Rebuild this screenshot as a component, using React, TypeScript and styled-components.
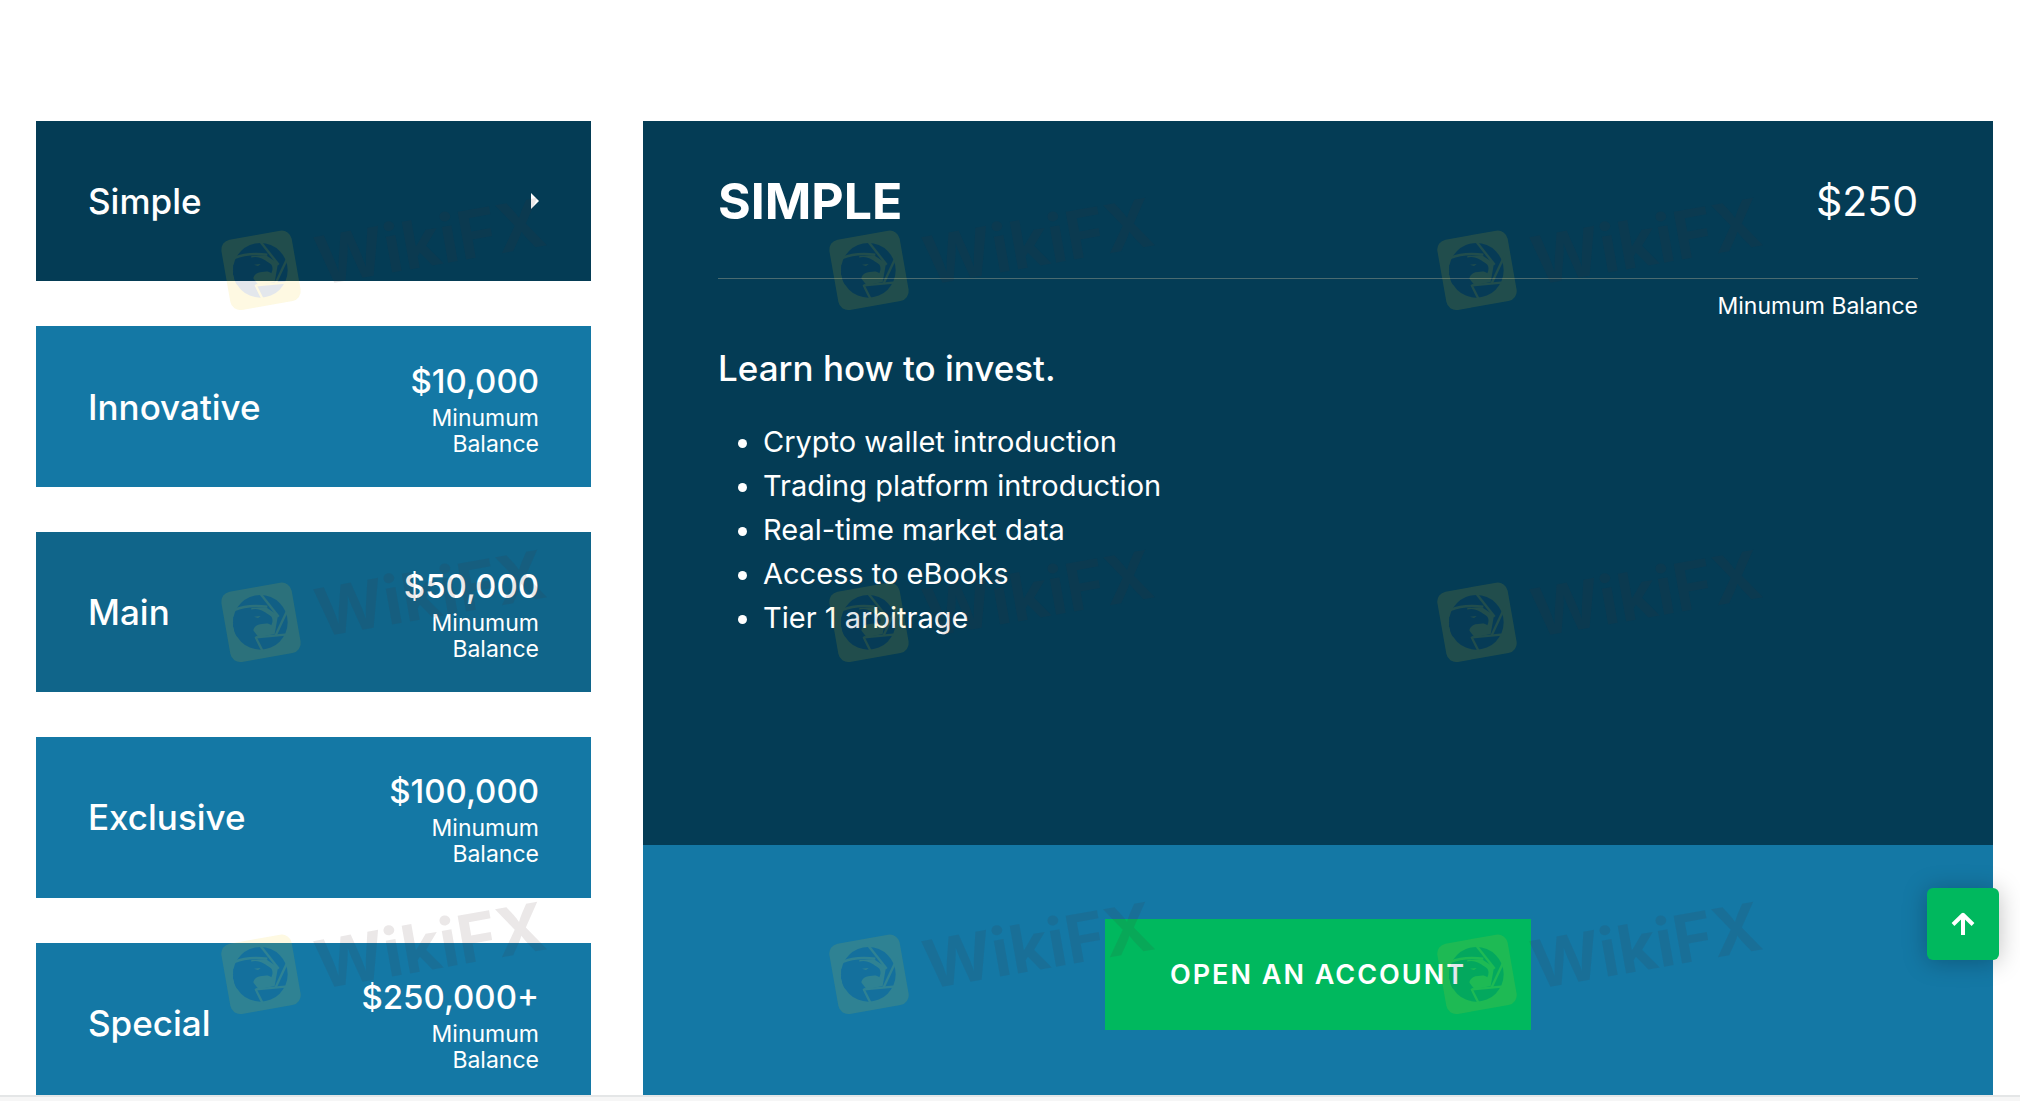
import React, { useState } from "react";
import styled, { createGlobalStyle } from "styled-components";

const GlobalStyle = createGlobalStyle`
  *, *::before, *::after { box-sizing: border-box; }
  body {
    margin: 0;
    background: #fff;
    color: #fff;
    font-family: Inter, "Open Sans", sans-serif;
  }
  h2, h3, p, ul { margin: 0; }
`;

const Page = styled.div`
  display: flex;
  flex-direction: column;
  height: 100vh;
  overflow: hidden;
`;

const Plans = styled.main`
  flex: 1;
  min-height: 0;
  overflow: hidden;
  display: grid;
  grid-template-columns: 37fr 90fr;
  align-items: start;
  align-content: start;
  gap: 52px;
  padding: 121px 27px 0 36px;
`;

const PlanList = styled.nav`
  align-self: stretch;
  display: flex;
  flex-direction: column;
  gap: 45px;
`;

const PlanCard = styled.button<{ $tone: string }>`
  flex: 1;
  display: flex;
  align-items: center;
  justify-content: space-between;
  padding: 0 52px;
  border: 0;
  background: ${(p) => p.$tone};
  color: inherit;
  font: inherit;
  cursor: pointer;
`;

const PlanName = styled.span`
  font-size: 35px;
  line-height: 46px;
  font-weight: 500;
`;

const PlanPrice = styled.span`
  display: flex;
  flex-direction: column;
  align-items: flex-end;
`;

const Amount = styled.span`
  font-size: 33px;
  line-height: 48px;
  font-weight: 500;
`;

const Note = styled.span`
  width: 130px;
  font-size: 23px;
  line-height: 26px;
  text-align: right;
`;

const Caret = styled.svg`
  width: 8px;
  height: 16px;
  fill: #fff;
`;

const Detail = styled.section`
  display: flex;
  flex-direction: column;
`;

const DetailBody = styled.div`
  min-height: 724px;
  padding: 40px 75px;
  background: #043c55;
`;

const DetailHead = styled.header`
  display: flex;
  align-items: center;
  justify-content: space-between;
  padding-bottom: 37px;
  border-bottom: 1px solid #4a6b70;
  line-height: 80px;
`;

const DetailTitle = styled.h2`
  font-size: 50px;
  font-weight: 700;
  text-transform: uppercase;
`;

const DetailAmount = styled.span`
  font-size: 41px;
  font-weight: 400;
`;

const DetailNote = styled.p`
  margin-top: 14px;
  font-size: 23px;
  line-height: 26px;
  text-align: right;
`;

const Lead = styled.h3`
  margin-top: 29px;
  font-size: 35px;
  line-height: 40px;
  font-weight: 500;
`;

const Features = styled.ul`
  margin-top: 32px;
  padding-left: 45px;
  font-size: 29px;
  line-height: 44px;
`;

const Cta = styled.div`
  display: flex;
  justify-content: center;
  padding: 74px 0 73px;
  background: #1478a5;
`;

const CtaLink = styled.a`
  padding: 40px 65px;
  background: #00b85e;
  color: #fff;
  font-size: 27px;
  line-height: 31px;
  font-weight: 600;
  letter-spacing: 2px;
  text-decoration: none;
  text-transform: uppercase;
`;

const BottomBar = styled.div`
  height: 6px;
  border-top: 2px solid #e4e6e7;
  background: #f6f6f6;
`;

const ToTop = styled.button`
  position: fixed;
  right: 21px;
  bottom: 141px;
  display: grid;
  place-items: center;
  width: 72px;
  height: 72px;
  border: 0;
  border-radius: 6px;
  background: #00b85e;
  box-shadow: 0 2px 24px rgba(0, 0, 0, 0.25);
  cursor: pointer;
`;

const WatermarkLayer = styled.div`
  position: fixed;
  inset: 176px 0 0 200px;
  display: grid;
  grid-template-columns: repeat(3, 360px);
  grid-auto-rows: 150px;
  gap: 202px 248px;
  align-content: start;
  overflow: hidden;
  pointer-events: none;
`;

const Mark = styled.svg`
  width: 360px;
  height: 150px;
  font-family: Inter, sans-serif;
  font-size: 200px;
  font-weight: 700;
`;

const GOLD = "#f0cc10";
const NAVY = "#1c3a66";

function Watermark() {
  return (
    <Mark viewBox="0 0 1080 450" aria-hidden="true">
      <g transform="translate(34 0)" opacity="0.12">
        <rect x="42" y="176" width="214" height="214" rx="30" fill={GOLD} transform="rotate(-10 149 283)" />
        <circle cx="147" cy="283" r="82" fill={NAVY} />
        <path d="M120 240 L164 238 L200 262 L190 318 L142 328 L120 300 Z" fill={GOLD} />
        <g stroke={GOLD} strokeWidth="7" fill="none">
          <path d="M70 246 C100 232 132 232 168 236" />
          <path d="M146 196 L202 266" />
          <path d="M234 234 L193 322" />
          <path d="M222 320 L134 328" />
          <path d="M132 326 L154 370" />
        </g>
        <path
          d="M66 268 C82 250 100 246 118 245 C146 238 162 254 178 264 C185 270 185 282 180 292 C172 284 162 286 152 288 C136 288 124 300 126 314 C128 332 138 346 144 362 C126 360 116 354 110 346 L108 352 C94 342 86 332 82 324 L78 328 C70 316 67 306 68 296 L65 298 C64 288 68 280 76 277 L66 278 Z"
          fill={NAVY}
        />
        <path d="M128 266 L148 264 L140 270 Z" fill={GOLD} />
      </g>
      <text x="360" y="328" fill="#4a2f32" opacity="0.11" transform="rotate(-10 360 328)">
        WikiFX
      </text>
    </Mark>
  );
}

const plans = [
  { name: "Simple", amount: "$250", tone: "#043c55" },
  { name: "Innovative", amount: "$10,000", tone: "#1478a5" },
  { name: "Main", amount: "$50,000", tone: "#10658a" },
  { name: "Exclusive", amount: "$100,000", tone: "#1478a5" },
  { name: "Special", amount: "$250,000+", tone: "#1478a5" },
];

const features = [
  "Crypto wallet introduction",
  "Trading platform introduction",
  "Real-time market data",
  "Access to eBooks",
  "Tier 1 arbitrage",
];

export default function App() {
  const [active, setActive] = useState(0);
  const plan = plans[active];
  return (
    <Page>
      <GlobalStyle />
      <Plans>
        <PlanList aria-label="Account types">
          {plans.map((p, i) => (
            <PlanCard key={p.name} type="button" $tone={p.tone} onClick={() => setActive(i)}>
              <PlanName>{p.name}</PlanName>
              {i === active ? (
                <Caret viewBox="0 0 8 16" aria-hidden="true">
                  <path d="M0 0 L8 8 L0 16 Z" />
                </Caret>
              ) : (
                <PlanPrice>
                  <Amount>{p.amount}</Amount>
                  <Note>Minumum Balance</Note>
                </PlanPrice>
              )}
            </PlanCard>
          ))}
        </PlanList>
        <Detail>
          <DetailBody>
            <DetailHead>
              <DetailTitle>{plan.name}</DetailTitle>
              <DetailAmount>{plan.amount}</DetailAmount>
            </DetailHead>
            <DetailNote>Minumum Balance</DetailNote>
            <Lead>Learn how to invest.</Lead>
            <Features>
              {features.map((f) => (
                <li key={f}>{f}</li>
              ))}
            </Features>
          </DetailBody>
          <Cta>
            <CtaLink href="#open">Open an account</CtaLink>
          </Cta>
        </Detail>
      </Plans>
      <BottomBar />
      <ToTop type="button" aria-label="Back to top">
        <svg width="24" height="24" viewBox="0 0 24 24" fill="none" stroke="#fff" strokeWidth="4">
          <path d="M12 23 V3" />
          <path d="M2 12.5 L12 2.8 L22 12.5" strokeLinejoin="round" />
        </svg>
      </ToTop>
      <WatermarkLayer>
        {Array.from({ length: 9 }, (_, i) => (
          <Watermark key={i} />
        ))}
      </WatermarkLayer>
    </Page>
  );
}
